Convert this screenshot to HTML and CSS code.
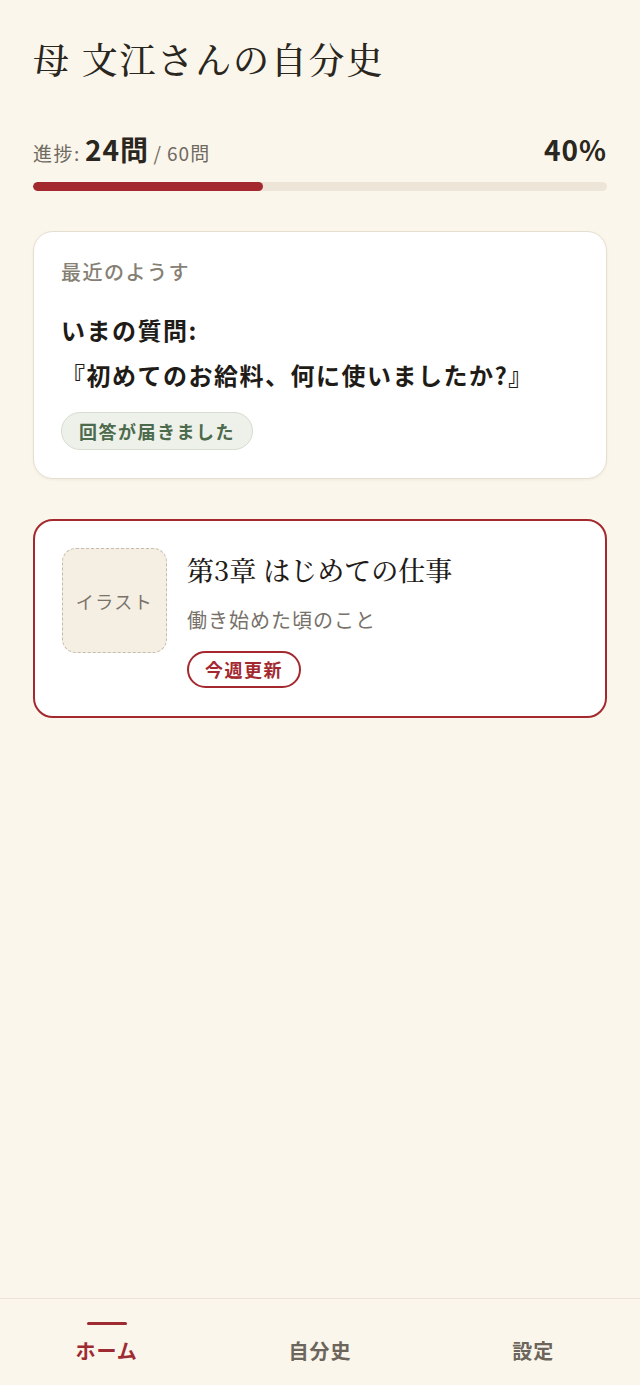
FILE: index.html
```html
<!DOCTYPE html>
<html lang="ja">
<head>
<meta charset="utf-8">
<link rel="stylesheet" href="styles.css">
</head>
<body>
<div class="app">
  <main class="main">
    <h1 class="title">母 文江さんの自分史</h1>
    <section class="progress">
      <div class="progress-row">
        <div class="progress-count"><span class="lbl">進捗:</span> <span class="num">24問</span> <span class="total">/ 60問</span></div>
        <div class="pct">40%</div>
      </div>
      <div class="bar"><div class="fill" style="width:40%"></div></div>
    </section>
    <section class="card recent">
      <div class="card-label">最近のようす</div>
      <div class="question">いまの質問:<br>『初めてのお給料、何に使いましたか?』</div>
      <span class="badge green">回答が届きました</span>
    </section>
    <section class="card chapter">
      <div class="illust">イラスト</div>
      <div class="chapter-body">
        <div class="chapter-title">第3章 はじめての仕事</div>
        <div class="chapter-sub">働き始めた頃のこと</div>
        <span class="badge red">今週更新</span>
      </div>
    </section>
  </main>
  <nav class="nav">
    <div class="nav-item active"><span class="indicator"></span>ホーム</div>
    <div class="nav-item">自分史</div>
    <div class="nav-item">設定</div>
  </nav>
</div>
</body>
</html>
```
FILE: styles.css
```css
* { box-sizing: border-box; }
html, body { margin: 0; padding: 0; }
body {
  background: #fbf6eb;
  font-family: "Noto Sans CJK JP", "Noto Sans", sans-serif;
  color: #2a2620;
}
.app {
  width: 640px;
  height: 1385px;
  display: flex;
  flex-direction: column;
}
.main {
  flex: 1;
  padding: 33px 33px 0 33px;
}
.title {
  margin: 0;
  font-family: "Noto Serif CJK JP", "Liberation Serif", serif;
  font-weight: 500;
  font-size: 36px;
  line-height: 52px;
  letter-spacing: 1.8px;
  color: #2a2620;
}
.progress { margin-top: 44px; }
.progress-row {
  display: flex;
  justify-content: space-between;
  align-items: baseline;
}
.progress-count { color: #6f6a62; font-size: 19px; }
.lbl { font-size: 19px; letter-spacing: 1.5px; }
.num { font-size: 28px; font-weight: 700; color: #2a2620; letter-spacing: 1px; }
.total { font-size: 19px; letter-spacing: 1px; }
.pct { font-size: 28px; font-weight: 700; color: #2a2620; letter-spacing: 1px; }
.bar {
  margin-top: 13px;
  height: 9px;
  background: #ede5d7;
  border-radius: 5px;
  overflow: hidden;
}
.fill { height: 100%; background: #a3292f; border-radius: 5px; }

.card {
  background: #fff;
  border-radius: 20px;
}
.recent {
  margin-top: 40px;
  border: 1.5px solid #e6dfd1;
  box-shadow: 0 1px 3px rgba(120, 100, 70, 0.08);
  padding: 27px 27px 28px 27px;
}
.card-label {
  font-size: 20px;
  font-weight: 500;
  letter-spacing: 1.5px;
  color: #867f74;
  line-height: 26px;
}
.question {
  margin-top: 22px;
  font-size: 24px;
  font-weight: 700;
  line-height: 45px;
  letter-spacing: 1.5px;
  color: #1f1c18;
}
.badge {
  display: inline-block;
  border-radius: 999px;
  font-weight: 700;
  font-size: 18px;
  letter-spacing: 1.5px;
}
.green {
  margin-top: 15px;
  background: #eef1ea;
  border: 1.5px solid #d5dcd0;
  color: #4c6a4c;
  padding: 5px 17px;
  line-height: 26px;
}
.chapter {
  margin-top: 40px;
  border: 2px solid #a3292f;
  padding: 27px 27px 28px 27px;
  display: flex;
  gap: 20px;
  align-items: flex-start;
}
.illust {
  width: 105px;
  height: 105px;
  flex: none;
  background: #f4eee3;
  border: 1.5px dashed #c6bcad;
  border-radius: 14px;
  display: flex;
  align-items: center;
  justify-content: center;
  font-size: 18px;
  letter-spacing: 1.5px;
  color: #7a7369;
}
.chapter-body { display: flex; flex-direction: column; align-items: flex-start; }
.chapter-title {
  font-family: "Noto Serif CJK JP", "Liberation Serif", serif;
  font-size: 27px;
  line-height: 40px;
  font-weight: 500;
  color: #1f1c18;
  margin-top: 2px;
}
.chapter-sub {
  margin-top: 16px;
  font-size: 20px;
  line-height: 28px;
  letter-spacing: 1px;
  color: #77716a;
}
.red {
  margin-top: 17px;
  border: 2px solid #a3292f;
  color: #a3292f;
  padding: 4px 16px;
  line-height: 25px;
}
.nav {
  height: 87px;
  border-top: 1.5px solid #ebe4d6;
  display: grid;
  grid-template-columns: 1fr 1fr 1fr;
  align-items: start;
}
.nav-item {
  position: relative;
  text-align: center;
  font-size: 20px;
  font-weight: 700;
  letter-spacing: 1px;
  color: #6b655c;
  padding-top: 38px;
  line-height: 28px;
}
.nav-item.active { color: #9e2a32; }
.indicator {
  position: absolute;
  top: 23px;
  left: 50%;
  width: 40px;
  margin-left: -20px;
  height: 3px;
  background: #9e2a32;
  border-radius: 2px;
}
```
